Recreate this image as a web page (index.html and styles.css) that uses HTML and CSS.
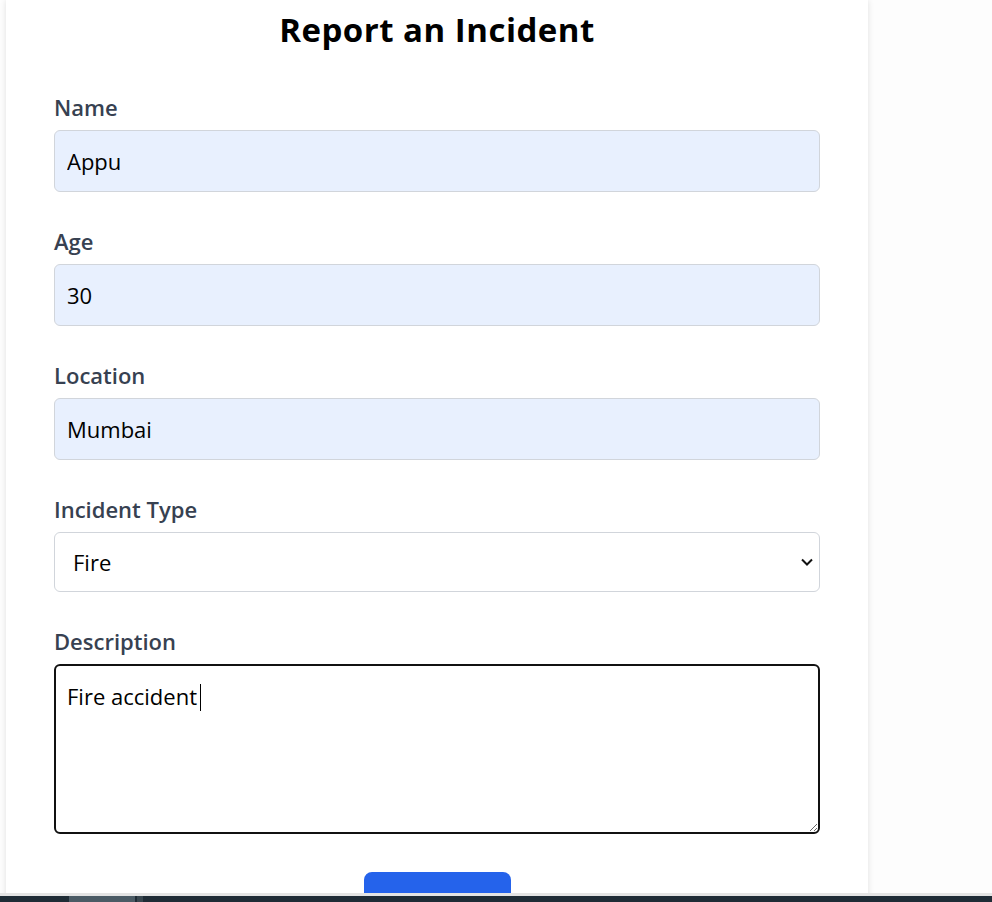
FILE: index.html
```html
<!DOCTYPE html>
<html lang="en">
<head>
<meta charset="utf-8">
<title>Report an Incident</title>
<link rel="stylesheet" href="styles.css">
</head>
<body>
<main class="card">
  <h1 class="title">Report an Incident</h1>
  <form class="form">
    <div class="field">
      <label class="label" for="name">Name</label>
      <input class="input autofill" id="name" type="text" value="Appu">
    </div>
    <div class="field">
      <label class="label" for="age">Age</label>
      <input class="input autofill" id="age" type="text" value="30">
    </div>
    <div class="field">
      <label class="label" for="loc">Location</label>
      <input class="input autofill" id="loc" type="text" value="Mumbai">
    </div>
    <div class="field">
      <label class="label" for="type">Incident Type</label>
      <div class="select-wrap">
        <select class="select" id="type">
          <option>Fire</option>
          <option>Flood</option>
          <option>Accident</option>
        </select>
        <svg class="chev" viewBox="0 0 12 8" width="12" height="8"><path d="M1 1.5 L6 6.5 L11 1.5" fill="none" stroke="#111" stroke-width="2"/></svg>
      </div>
    </div>
    <div class="field">
      <label class="label" for="desc">Description</label>
      <div class="textarea-wrap">
        <textarea class="textarea" id="desc">Fire accident</textarea>
        <span class="caret"></span>
      </div>
    </div>
    <div class="actions">
      <button class="submit" type="button">Submit</button>
    </div>
  </form>
</main>
<div class="screen-bottom">
  <div class="gray-line"></div>
  <div class="taskbar">
    <span class="tb-item tb-a"></span>
    <span class="tb-item tb-b"></span>
  </div>
</div>
</body>
</html>
```
FILE: styles.css
```css
html, body {
  margin: 0;
  padding: 0;
  background: #fdfdfd;
  height: 100%;
  overflow: hidden;
}

body {
  font-family: "Open Sans", "Noto Sans", sans-serif;
  color: #000;
}

.card {
  margin-left: 6px;
  width: 766px;
  padding: 0 48px 40px;
  background: #fff;
  box-shadow: 0 0 6px rgba(0, 0, 0, 0.12);
  min-height: 100vh;
}

.title {
  margin: 0;
  padding-top: 8px;
  text-align: center;
  font-size: 33px;
  line-height: 44px;
  font-weight: 700;
  letter-spacing: 0.5px;
}

.form {
  display: flex;
  flex-direction: column;
  margin-top: 42px;
}

.field {
  display: flex;
  flex-direction: column;
  margin-bottom: 36px;
}

.label {
  font-size: 22px;
  line-height: 26px;
  font-weight: 600;
  color: #374151;
  margin-bottom: 10px;
}

.input {
  box-sizing: border-box;
  height: 62px;
  width: 100%;
  padding: 0 12px;
  font-family: inherit;
  font-size: 22px;
  color: #000;
  border: 1px solid #d1d5db;
  border-radius: 6px;
  outline: none;
}

.autofill {
  background: #e8f0fe;
}

.select-wrap {
  position: relative;
}

.select {
  box-sizing: border-box;
  width: 100%;
  height: 60px;
  padding: 0 18px;
  font-family: inherit;
  font-size: 22px;
  color: #000;
  background: #fff;
  border: 1px solid #d1d5db;
  border-radius: 6px;
  appearance: none;
  -webkit-appearance: none;
  outline: none;
}

.chev {
  position: absolute;
  right: 7px;
  top: 26px;
  pointer-events: none;
}

.textarea-wrap {
  position: relative;
}

.textarea {
  box-sizing: border-box;
  display: block;
  width: 100%;
  height: 170px;
  padding: 15px 11px;
  font-family: inherit;
  font-size: 22px;
  line-height: 30px;
  color: #000;
  background: #fff;
  border: 2px solid #111;
  border-radius: 6px;
  outline: none;
  resize: vertical;
  caret-color: transparent;
}

.caret {
  position: absolute;
  left: 146px;
  top: 20px;
  width: 1px;
  height: 27px;
  background: #000;
}

.actions {
  display: flex;
  justify-content: center;
  margin-top: 2px;
}

.submit {
  width: 147px;
  padding: 30px 0 14px;
  background: #2563eb;
  color: #fff;
  border: none;
  border-radius: 8px;
  font-family: inherit;
  font-size: 20px;
  line-height: 28px;
  font-weight: 600;
}

.screen-bottom {
  position: fixed;
  left: 0;
  right: 0;
  bottom: 0;
  height: 9px;
  display: flex;
  flex-direction: column;
}

.gray-line {
  height: 3px;
  background: #e4e4e4;
}

.taskbar {
  flex: 1;
  background: #1f2c36;
  position: relative;
}

.tb-item {
  position: absolute;
  top: 0;
  bottom: 0;
  background: #4b5b65;
}

.tb-a {
  left: 69px;
  width: 66px;
}

.tb-b {
  left: 137px;
  width: 6px;
  background: #38464f;
}
```
